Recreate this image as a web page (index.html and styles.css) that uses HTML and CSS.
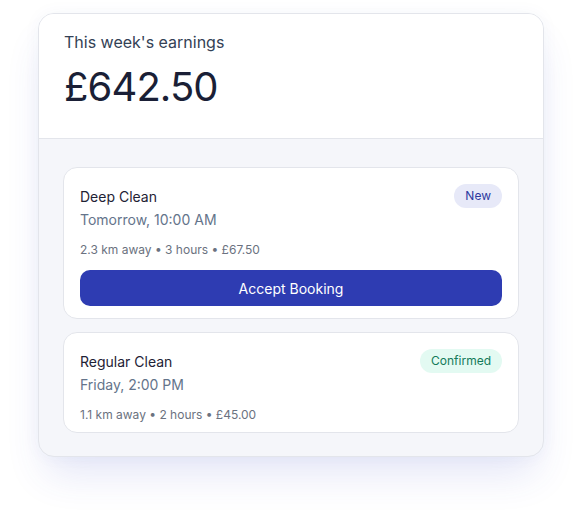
FILE: index.html
```html
<!DOCTYPE html>
<html lang="en">
<head>
<meta charset="utf-8">
<title>Earnings</title>
<link rel="stylesheet" href="styles.css">
</head>
<body>
<div class="panel">
  <div class="earnings">
    <div class="earnings-label">This week's earnings</div>
    <div class="earnings-amount">£642.50</div>
  </div>
  <div class="bookings">
    <div class="booking">
      <div class="booking-head">
        <div class="booking-title">Deep Clean</div>
        <span class="badge badge-new">New</span>
      </div>
      <div class="booking-time">Tomorrow, 10:00 AM</div>
      <div class="booking-meta">2.3 km away • 3 hours • £67.50</div>
      <button class="accept">Accept Booking</button>
    </div>
    <div class="booking booking-compact">
      <div class="booking-head">
        <div class="booking-title">Regular Clean</div>
        <span class="badge badge-confirmed">Confirmed</span>
      </div>
      <div class="booking-time">Friday, 2:00 PM</div>
      <div class="booking-meta">1.1 km away • 2 hours • £45.00</div>
    </div>
  </div>
</div>
</body>
</html>
```
FILE: styles.css
```css
* { box-sizing: border-box; }
html, body { margin: 0; background: #ffffff; }
body {
  font-family: "Inter", "Noto Sans", sans-serif;
  padding: 13px 38px 64px 38px;
  width: 582px;
  min-height: 519px;
}
.panel {
  width: 506px;
  border: 1px solid #e3e5eb;
  border-radius: 16px;
  overflow: hidden;
  background: #f5f6fa;
  box-shadow: 0 0 18px rgba(60, 70, 160, 0.04), 0 24px 40px -8px rgba(60, 70, 200, 0.14);
}
.earnings {
  background: #ffffff;
  border-bottom: 1px solid #e3e5eb;
  padding: 16px 25px 27px;
}
.earnings-label {
  font-size: 16px;
  line-height: 24px;
  color: #334155;
}
.earnings-amount {
  margin-top: 9px;
  font-size: 40px;
  line-height: 48px;
  color: #1a1f36;
  letter-spacing: -0.9px;
}
.bookings {
  padding: 28px 24px 23px;
  display: flex;
  flex-direction: column;
  gap: 13px;
}
.booking {
  background: #ffffff;
  border: 1px solid #e3e5eb;
  border-radius: 14px;
  padding: 16px 16px 12px;
}
.booking-compact { padding-bottom: 9px; }
.booking-head {
  display: flex;
  justify-content: space-between;
  align-items: center;
}
.booking-title {
  font-size: 14px;
  color: #1e2235;
}
.badge {
  font-size: 12px;
  line-height: 16px;
  padding: 4px 11px;
  border-radius: 12px;
}
.badge-new { background: #e7e9f8; color: #2e3a9f; }
.badge-confirmed { background: #e3faf2; color: #137a5a; }
.booking-time {
  margin-top: 2px;
  font-size: 14px;
  line-height: 20px;
  color: #64748b;
}
.booking-meta {
  margin-top: 12px;
  font-size: 12px;
  line-height: 16px;
  color: #6b7280;
}
.accept {
  display: block;
  width: 100%;
  margin-top: 12px;
  height: 36px;
  border: none;
  border-radius: 10px;
  background: #2e3cb2;
  color: #ffffff;
  font-family: inherit;
  font-size: 14px;
}
```
